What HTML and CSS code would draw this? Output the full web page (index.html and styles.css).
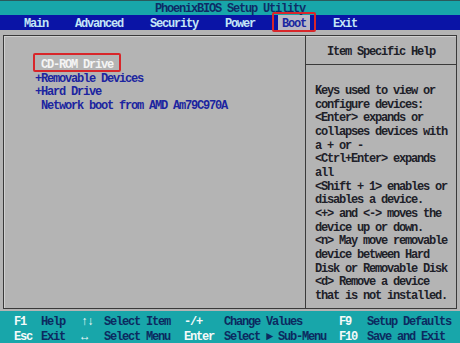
FILE: index.html
```html
<!DOCTYPE html>
<html lang="en">
<head>
  <meta charset="UTF-8" />
  <title>PhoenixBIOS Setup Utility</title>
  <link rel="stylesheet" href="styles.css">
</head>
<body>
  <div class="screen">
    <div class="titlebar">PhoenixBIOS Setup Utility</div>

    <div class="menubar">
      <span class="menu-item">Main</span>
      <span class="menu-item">Advanced</span>
      <span class="menu-item">Security</span>
      <span class="menu-item">Power</span>
      <span class="menu-item active">Boot<span class="mark"></span></span>
      <span class="menu-item">Exit</span>
    </div>

    <div class="body">
      <div class="frame">
        <div class="boot-list">
          <div class="boot-item selected">CD-ROM Drive<span class="mark"></span></div>
          <div class="boot-item">+Removable Devices</div>
          <div class="boot-item">+Hard Drive</div>
          <div class="boot-item indent">Network boot from AMD Am79C970A</div>
        </div>
        <div class="help">
          <div class="help-title">Item Specific Help</div>
          <div class="help-text">
            <div>Keys used to view or</div>
            <div>configure devices:</div>
            <div>&lt;Enter&gt; expands or</div>
            <div>collapses devices with</div>
            <div>a + or -</div>
            <div>&lt;Ctrl+Enter&gt; expands</div>
            <div>all</div>
            <div>&lt;Shift + 1&gt; enables or</div>
            <div>disables a device.</div>
            <div>&lt;+&gt; and &lt;-&gt; moves the</div>
            <div>device up or down.</div>
            <div>&lt;n&gt; May move removable</div>
            <div>device between Hard</div>
            <div>Disk or Removable Disk</div>
            <div>&lt;d&gt; Remove a device</div>
            <div>that is not installed.</div>
          </div>
        </div>
      </div>
    </div>

    <div class="footer">
      <span class="key">F1</span><span class="desc">Help</span>
      <span class="key">↑↓</span><span class="desc">Select Item</span>
      <span class="key">-/+</span><span class="desc">Change Values</span>
      <span class="key">F9</span><span class="desc">Setup Defaults</span>

      <span class="key">Esc</span><span class="desc">Exit</span>
      <span class="key">↔</span><span class="desc">Select Menu</span>
      <span class="key">Enter</span><span class="desc">Select ► Sub-Menu</span>
      <span class="key">F10</span><span class="desc">Save and Exit</span>
    </div>
  </div>
</body>
</html>
```

FILE: styles.css
```css
body {
  margin: 0;
  background-color: #b4b4b4;
}

.screen {
  width: 460px;
  height: 343px;
  display: flex;
  flex-direction: column;
  font-family: 'Liberation Mono', 'DejaVu Sans Mono', monospace;
  font-weight: bold;
  font-size: 12px;
  letter-spacing: -1.2px;
  overflow: hidden;
}

.titlebar {
  height: 15px;
  line-height: 16px;
  background-color: #18a6aa;
  color: #0e2c66;
  text-align: center;
  border-top: 1px solid #2a5a5c;
  box-sizing: border-box;
}

.menubar {
  height: 15px;
  background-color: #0a14a6;
  display: flex;
  gap: 27px;
  padding-left: 24px;
}

.menu-item {
  height: 15px;
  box-sizing: border-box;
  padding-top: 2px;
  line-height: 15px;
  color: #c4e6f6;
  position: relative;
}

.menu-item.active {
  color: #1a26a0;
  background-color: #b8b8c4;
  margin: 0 -4px;
  padding: 2px 4px 0;
}

.menu-item .mark {
  position: absolute;
  left: -6px;
  right: -6px;
  top: -3px;
  bottom: -2px;
  border: 2px solid #d8262a;
  border-radius: 2px;
}

.body {
  flex: 1;
  padding: 5px 3px 2px 3px;
  background-color: #b4b4b4;
}

.frame {
  height: 100%;
  box-sizing: border-box;
  border: 1px solid #3a3a3a;
  box-shadow: inset 1px 1px 0 #d0d0d0;
  display: grid;
  grid-template-columns: 302px 1fr;
}

.boot-list {
  padding: 23px 0 0 31px;
  border-right: 1px solid #3a3a3a;
  line-height: 13.6px;
}

.boot-item {
  color: #1c24a0;
}

.boot-item.indent,
.boot-item.selected {
  padding-left: 6px;
}

.boot-item.selected {
  color: #f4f4f4;
  position: relative;
  width: 72px;
}

.boot-item.selected .mark {
  position: absolute;
  left: -2px;
  right: -8px;
  top: -6px;
  bottom: 1px;
  border: 2px solid #d8262a;
  border-radius: 2px;
}

.help {
  display: flex;
  flex-direction: column;
}

.help-title {
  height: 28px;
  line-height: 32px;
  text-align: center;
  color: #202028;
  border-bottom: 1px solid #3a3a3a;
}

.help-text {
  padding: 20px 0 0 9px;
  line-height: 13.65px;
  color: #202028;
}

.footer {
  height: 32px;
  box-sizing: border-box;
  padding: 4px 0 0 14px;
  background-color: #18a6aa;
  display: grid;
  grid-template-columns: 27px 40px 23px 80px 40px 115px 28px 1fr;
  grid-auto-rows: 14.5px;
  align-content: start;
  line-height: 14.5px;
}

.footer .key {
  color: #f4fafa;
}

.footer .desc {
  color: #0c2a60;
}
```
